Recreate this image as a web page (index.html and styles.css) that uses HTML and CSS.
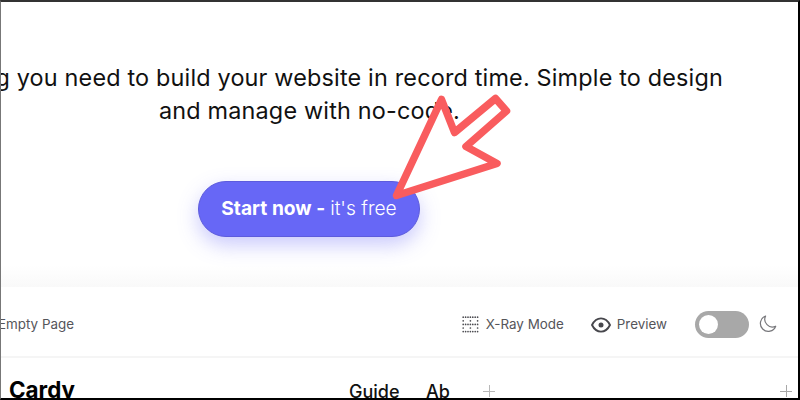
FILE: index.html
```
<!DOCTYPE html>
<html lang="en">
<head>
  <meta charset="UTF-8" />
  <meta name="viewport" content="width=device-width, initial-scale=1.0"/>
  <title>Website Builder</title>

  <link rel="stylesheet" href="styles.css">
</head>
<body>
  <div class="page">
    <section class="hero">
      <p class="tagline">
        <span class="line line-first">g you need to build your website in record time. Simple to design</span>
        <span class="line line-second">and manage with no-code.</span>
      </p>
      <a class="start-button" href="#"><span class="start-bold">Start now -</span> <span class="start-light">it's free</span></a>
    </section>

    <section class="editor">
      <div class="toolbar">
        <span class="page-name">Empty Page</span>
        <div class="tools">
          <div class="tool xray">
            <svg class="dots-icon" width="17" height="17" viewBox="0 0 17 17" fill="none" stroke="#4d4d52" stroke-width="1.7" stroke-linecap="round">
              <path stroke-dasharray="0 2.4" d="M1.2 1.2H15.800M1.2 8.400H15.800M1.2 15.600H15.800" />
              <path d="M1.200 4.800h0M8.400 4.800h0M15.600 4.800h0M1.200 12h0M8.400 12h0M15.600 12h0" />
            </svg>
            <span>X-Ray Mode</span>
          </div>
          <div class="tool preview">
            <svg width="20" height="16" viewBox="0 0 20 16" fill="none" stroke="#47474c">
              <path stroke-width="1.9" stroke-linejoin="round" d="M1 8C3.2 3.6 6.4 1.4 10 1.4S16.8 3.6 19 8C16.8 12.4 13.6 14.6 10 14.6S3.2 12.4 1 8Z" />
              <circle cx="10" cy="8" r="2.5" fill="#47474c" stroke="none" />
            </svg>
            <span>Preview</span>
          </div>
          <div class="switch"><div class="knob"></div></div>
          <svg class="moon" width="18" height="18" viewBox="0 0 18 18" fill="none" stroke="#77777b" stroke-width="1.2" stroke-linejoin="round">
            <path d="M6.6 1A7.9 7.9 0 1 0 16.7 11.2A7.6 7.6 0 0 1 6.6 1Z" />
          </svg>
        </div>
      </div>

      <div class="site-nav">
        <span class="brand">Cardy</span>
        <span class="nav-link guide">Guide</span>
        <span class="nav-link about">Ab</span>
        <svg class="plus plus-nav" width="12" height="12" viewBox="0 0 12 12" stroke="#b8b8b8">
          <path d="M0 6.5H12M6.5 0V12" />
        </svg>
        <svg class="plus plus-end" width="12" height="12" viewBox="0 0 12 12" stroke="#a8a8a8">
          <path d="M0 6.5H12M6.5 0V12" />
        </svg>
      </div>
    </section>

    <!-- pointer lying over the hero -->
    <svg class="pointer" width="130" height="120" viewBox="385 85 130 120" fill="#fff" stroke="#f95c5e" stroke-width="7.5" stroke-linejoin="round">
      <path d="M396.5 195.5L441.5 99.5L454.5 132.5L495.5 98.5L506.5 111L466 146.500L497 163.5Z" />
    </svg>
    <div class="frame"></div>
  </div>
</body>
</html>
```

FILE: styles.css
```
* {
  margin: 0;
  padding: 0;
  box-sizing: border-box;
}

body {
  font-family: Inter, "Liberation Sans", sans-serif;
  background: #fff;
  color: #111;
  overflow: hidden;
}

.page {
  position: relative;
  width: 800px;
  height: 400px;
  overflow: hidden;
}

.hero {
  height: 287px;
  padding-top: 61px;
  background: linear-gradient(to bottom, #fff 265px, #f9f9f9 287px);
}

.tagline {
  font-size: 23.4px;
  letter-spacing: 0.18px;
  line-height: 33px;
}

.line {
  display: block;
  white-space: nowrap;
}

.line-first {
  display: flex;
  justify-content: flex-end;
  padding-right: 77px;
}

.line-second {
  padding-left: 159px;
}

.start-button {
  display: flex;
  align-items: center;
  justify-content: center;
  gap: 5px;
  width: 222px;
  height: 56px;
  margin: 54px 0 0 198px;
  padding-bottom: 3px;
  border: 1px solid #5d5bdc;
  border-radius: 28px;
  background: #6767f6;
  box-shadow: 0 8px 20px rgba(103, 103, 246, 0.35);
  color: #fff;
  font-size: 19.2px;
  text-decoration: none;
  white-space: nowrap;
}

.start-bold {
  font-weight: 700;
}

.start-light {
  font-weight: 300;
}

.toolbar {
  display: flex;
  align-items: center;
  justify-content: space-between;
  height: 71px;
  padding: 6px 23px 0 0;
  border-bottom: 2px solid #f5f5f5;
  color: #55555a;
  font-size: 13.4px;
}

.page-name {
  margin: -2px 0 0 -2px;
}

.tools,
.tool {
  display: flex;
  align-items: center;
}

.xray {
  gap: 7px;
}

.preview {
  gap: 6px;
  margin-left: 27px;
}

.tool span {
  margin-top: -2px;
}

.switch {
  width: 54px;
  height: 27px;
  margin-left: 28px;
  padding: 4px;
  border-radius: 14px;
  background: #a8a8a8;
}

.knob {
  width: 19px;
  height: 19px;
  border-radius: 50%;
  background: #fff;
}

.moon {
  margin: -1px 0 0 10px;
}

.site-nav {
  display: flex;
  align-items: flex-start;
  height: 42px;
  padding: 18px 8px 0 9px;
  overflow: hidden;
}

.brand {
  width: 340px;
  color: #000;
  font-size: 22.4px;
  font-weight: 700;
  line-height: 27px;
}

.nav-link {
  font-size: 18px;
  font-weight: 500;
  line-height: 31px;
}

.guide {
  width: 77px;
}

.about {
  width: 57px;
}

.plus {
  margin-top: 9px;
}

.plus-end {
  margin-left: auto;
}

.pointer {
  position: absolute;
  left: 385px;
  top: 85px;
}

.frame {
  position: absolute;
  inset: 0;
  border: 2px solid #000;
  border-top-color: #333;
  border-left: 1px solid #777;
}
```
